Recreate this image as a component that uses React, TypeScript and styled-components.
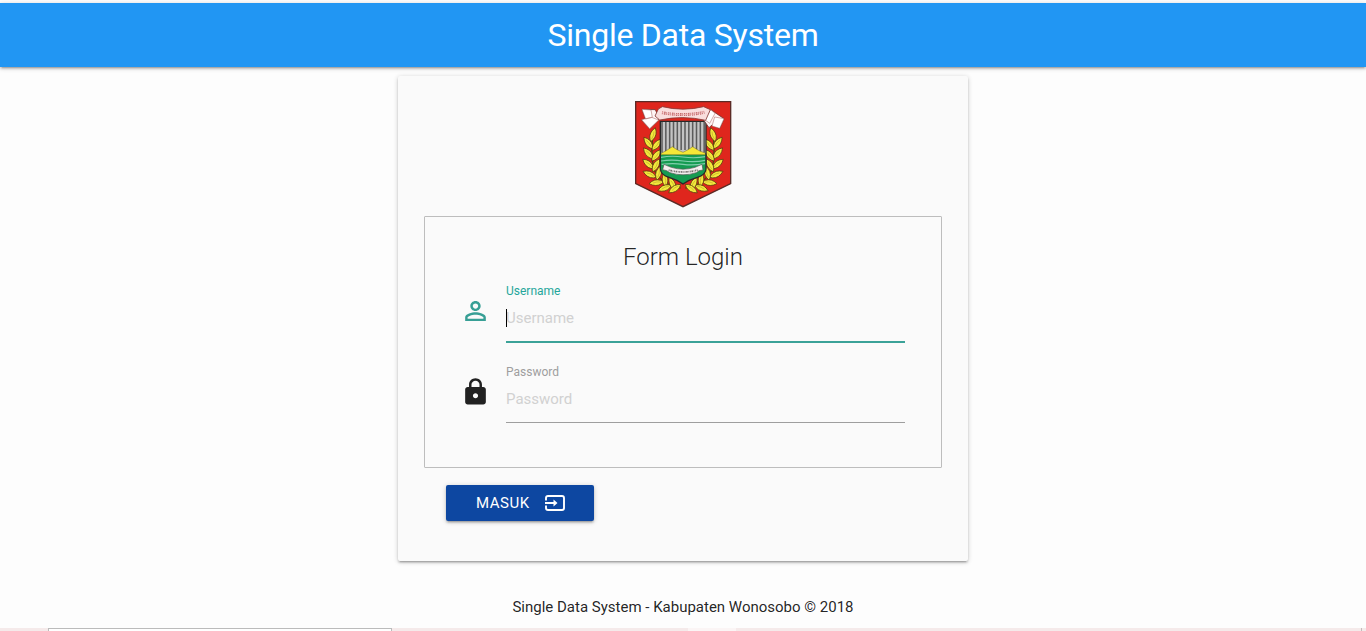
import React from "react";
import styled, { createGlobalStyle } from "styled-components";

const GlobalStyle = createGlobalStyle`
  * { box-sizing: border-box; }
  body {
    margin: 0;
    background: #fdfdfd;
    color: rgba(0, 0, 0, 0.87);
    font-family: Roboto, "Liberation Sans", sans-serif;
    font-size: 15px;
    line-height: 1.5;
  }
`;

const Page = styled.div`
  height: 631px;
  overflow: hidden;
  display: flex;
  flex-direction: column;
  align-items: center;
  padding-top: 3px;
`;

const Header = styled.header`
  width: 100%;
  height: 64px;
  flex: none;
  background: #2196f3;
  color: #fff;
  font-size: 32px;
  letter-spacing: -0.25px;
  line-height: 64px;
  text-align: center;
  box-shadow: 0 2px 2px 0 rgba(0, 0, 0, 0.14), 0 3px 1px -2px rgba(0, 0, 0, 0.12),
    0 1px 5px 0 rgba(0, 0, 0, 0.2);
`;

const Card = styled.main`
  width: 570px;
  height: 485px;
  flex: none;
  margin-top: 9px;
  padding: 16px 26px 0;
  display: flex;
  flex-direction: column;
  background: #fafafa;
  border-radius: 2px;
  box-shadow: 0 2px 2px 0 rgba(0, 0, 0, 0.14), 0 3px 1px -2px rgba(0, 0, 0, 0.12),
    0 1px 5px 0 rgba(0, 0, 0, 0.2);
`;

const Crest = styled.svg`
  display: block;
  flex: none;
  align-self: center;
  width: 120px;
  height: 122px;
`;

const FormBox = styled.section`
  height: 252px;
  margin-top: 2px;
  padding: 22px 36px 0 40px;
  border: 1px solid #bdbdbd;
  border-radius: 1px;
`;

const FormTitle = styled.h1`
  margin: 0 0 9px;
  padding-right: 4px;
  font-size: 24px;
  font-weight: 300;
  line-height: 36px;
  text-align: center;
`;

const Field = styled.div<{ $active?: boolean }>`
  display: grid;
  grid-template-columns: 41px 1fr;
  height: 81px;
  color: ${(p) => (p.$active ? "#26a69a" : "#9e9e9e")};
`;

const FieldIcon = styled.svg<{ $dark?: boolean }>`
  width: 31px;
  height: 30px;
  margin: 12px 0 0 -5px;
  fill: ${(p) => (p.$dark ? "#212121" : "#379f95")};
`;

const FieldBody = styled.div`
  display: flex;
  flex-direction: column;
`;

const Label = styled.label`
  font-size: 12px;
  line-height: 14px;
`;

const InputRow = styled.div<{ $active?: boolean }>`
  position: relative;
  height: ${(p) => (p.$active ? "45px" : "44px")};
  border-bottom: ${(p) => (p.$active ? "2px solid #3ba298" : "1px solid #9e9e9e")};
`;

const Input = styled.input`
  display: block;
  width: 100%;
  height: 39px;
  padding: 0;
  border: 0;
  outline: 0;
  background: transparent;
  font: 15px Roboto, "Liberation Sans", sans-serif;
  caret-color: transparent;
  &::placeholder { color: #d1d1d1; opacity: 1; }
`;

const Caret = styled.span`
  position: absolute;
  left: 0;
  top: 11px;
  width: 1px;
  height: 18px;
  background: #000;
`;

const SubmitButton = styled.button`
  width: 148px;
  height: 36px;
  margin: 17px 0 0 22px;
  padding: 0 0 0 30px;
  display: flex;
  align-items: center;
  gap: 15px;
  border: 0;
  border-radius: 2px;
  background: #0d47a1;
  color: #fff;
  font: 15px Roboto, "Liberation Sans", sans-serif;
  letter-spacing: 0.5px;
  box-shadow: 0 2px 2px 0 rgba(0, 0, 0, 0.14), 0 3px 1px -2px rgba(0, 0, 0, 0.12),
    0 1px 5px 0 rgba(0, 0, 0, 0.2);
  svg { width: 20px; height: 16px; flex: none; }
`;

const Footer = styled.footer`
  margin-top: 34px;
  line-height: 24px;
  flex: none;
`;

const BottomStrip = styled.div`
  width: 100%;
  height: 3px;
  flex: none;
  margin-top: auto;
  display: grid;
  grid-template-columns: 48px 344px 296px 48px 625px 1px 1fr;
`;

const segmentColors = { pink: "#f5eaea", box: "#fff", pale: "#fbf5f5", line: "#c4bcbc" };

const Segment = styled.span<{ $kind: keyof typeof segmentColors }>`
  background: ${(p) => segmentColors[p.$kind]};
  border: ${(p) => (p.$kind === "box" ? "1px solid #bbb" : "0")};
  border-bottom: 0;
`;

// x, y, rotation of each leaf on the left half of the wreath
const leaves: [number, number, number][] = [
  [90, 128, 18], [76, 153, -38], [101, 158, 38], [76, 184, -42], [100, 190, 38],
  [76, 216, -50], [99, 220, 28], [80, 247, -66], [107, 243, 14], [100, 272, -98],
  [126, 263, -6], [125, 288, -112], [148, 275, -26], [155, 290, -125],
];

const Wreath = () => (
  <g>
    <path d="M89 135 Q82 215 99 244 Q125 281 173 288" fill="none" stroke="#55480a" strokeWidth="4" />
    {leaves.map(([x, y, r]) => (
      <g key={`${x}-${y}`} transform={`translate(${x} ${y}) rotate(${r})`}>
        <path d="M0 -22 Q14 -4 5 14 L0 22 L-5 15 Q-14 -2 0 -22Z" fill="#f2e93b" stroke="#5a3a10" strokeWidth="2.2" />
        <path d="M0 -10 Q4 2 0 14" fill="none" stroke="#b0922a" strokeWidth="1.4" />
      </g>
    ))}
  </g>
);

const RegencyCrest = () => (
  <Crest viewBox="0 0 360 366" role="img">
    <path d="M38 29H323V275L180 344L38 275Z" fill="#df261d" stroke="#5b2b26" strokeWidth="4" />
    <Wreath />
    <g transform="translate(360 0) scale(-1 1)"><Wreath /></g>

    <path d="M112 88H249V231Q247 249 223 256Q198 263 180 276Q162 263 138 256Q114 249 112 231Z" fill="#159b51" />
    <path d="M112 88H249V184H112Z" fill="#c4c4c4" />
    {Array.from({ length: 12 }, (_, i) => (
      <path key={i} d={`M${117 + i * 11.5} 90V${i < 2 || i > 9 ? 182 : 174}`} stroke="#5c5c5c" strokeWidth="4.6" />
    ))}
    <path d="M113 185Q131 176 148 164Q161 174 180 181Q197 173 209 164Q226 177 248 184V188H113Z" fill="#f5e737" stroke="#756f25" strokeWidth="1.5" />
    <path d="M114 196Q145 190 180 195T247 194M114 207Q145 202 180 207T247 205M116 217Q150 213 180 217T246 215" fill="none" stroke="#80cfad" strokeWidth="3.5" />
    <path d="M112 88H249V231Q247 249 223 256Q198 263 180 276Q162 263 138 256Q114 249 112 231Z" fill="none" stroke="#292929" strokeWidth="4" />
    <path d="M123 217L137 223L145 226Q180 237 216 226L237 217L240 234L228 236L220 242Q180 255 141 242L131 236L119 233Z" fill="#f3eeee" stroke="#4c554f" strokeWidth="2" />
    <path d="M137 234Q180 246 224 234" fill="none" stroke="#77706f" strokeWidth="5" strokeDasharray="3 2 5 2 2 2" />

    <path d="M97 53L57 52L67 79L56 84L80 110L107 84L108 78Z" fill="#fff5f5" stroke="#713632" strokeWidth="2.5" />
    <path d="M263 53L303 80L290 109L267 99L258 107L242 84L252 78Z" fill="#fff5f5" stroke="#713632" strokeWidth="2.5" />
    <path d="M56 83L86 76L107 84L80 110Z M57 52L84 54L88 76L68 81Z" fill="#fff" stroke="#a75e5b" strokeWidth="1.5" />
    <path d="M303 80L275 75L267 102L290 109Z M263 53L244 82L260 94L276 64Z" fill="#fff" stroke="#a75e5b" strokeWidth="1.5" />
    <path d="M106 51L118 44Q180 59 242 44L262 53L248 85Q180 69 110 84L96 72Z" fill="#f9dedd" stroke="#843c38" strokeWidth="2.5" />
    <path d="M117 62Q180 74 244 61" fill="none" stroke="#c46a6c" strokeWidth="9" strokeDasharray="3 3 5 2 2 3 4 2" />
    <path d="M117 62Q180 74 244 61" fill="none" stroke="#efbcbc" strokeWidth="3" strokeDasharray="5 3" />
  </Crest>
);

export default function App() {
  return (
    <>
      <GlobalStyle />
      <Page>
        <Header>Single Data System</Header>
        <Card>
          <RegencyCrest />
          <FormBox>
            <FormTitle>Form Login</FormTitle>
            <Field $active>
              <FieldIcon viewBox="0 0 24 24" preserveAspectRatio="none">
                <path d="M12 5.900c1.160 0 2.100.94 2.100 2.100s-.94 2.100-2.100 2.100S9.900 9.160 9.900 8s.94-2.100 2.100-2.100m0 9c2.970 0 6.100 1.460 6.100 2.100v1.100H5.900V17c0-.64 3.130-2.100 6.100-2.100M12 4C9.790 4 8 5.790 8 8s1.790 4 4 4 4-1.790 4-4-1.790-4-4-4zm0 9c-2.670 0-8 1.340-8 4v3h16v-3c0-2.660-5.330-4-8-4z" />
              </FieldIcon>
              <FieldBody>
                <Label htmlFor="username">Username</Label>
                <InputRow $active>
                  <Input id="username" placeholder="Username" />
                  <Caret />
                </InputRow>
              </FieldBody>
            </Field>
            <Field>
              <FieldIcon $dark viewBox="0 0 24 24" preserveAspectRatio="none">
                <path d="M18 8h-1V6c0-2.760-2.240-5-5-5S7 3.240 7 6v2H6c-1.100 0-2 .9-2 2v10c0 1.100.9 2 2 2h12c1.100 0 2-.9 2-2V10c0-1.100-.9-2-2-2zm-6 9c-1.100 0-2-.9-2-2s.9-2 2-2 2 .9 2 2-.9 2-2 2zm3.100-9H8.900V6c0-1.710 1.390-3.100 3.100-3.100s3.100 1.390 3.100 3.100v2z" />
              </FieldIcon>
              <FieldBody>
                <Label htmlFor="password">Password</Label>
                <InputRow>
                  <Input id="password" type="password" placeholder="Password" />
                </InputRow>
              </FieldBody>
            </Field>
          </FormBox>
          <SubmitButton type="button">
            MASUK
            <svg viewBox="0 0 20 16">
              <path d="M1 5.500V3Q1 1 3 1H17Q19 1 19 3V13Q19 15 17 15H3Q1 15 1 13V10.500" fill="none" stroke="#fff" strokeWidth="1.900" />
              <path d="M0 7H8.500V4.500L12.500 8L8.500 11.500V9H0Z" fill="#fff" />
            </svg>
          </SubmitButton>
        </Card>
        <Footer>Single Data System - Kabupaten Wonosobo © 2018</Footer>
        <BottomStrip>
          <Segment $kind="pink" />
          <Segment $kind="box" />
          <Segment $kind="pink" />
          <Segment $kind="pale" />
          <Segment $kind="pink" />
          <Segment $kind="line" />
          <Segment $kind="pink" />
        </BottomStrip>
      </Page>
    </>
  );
}
